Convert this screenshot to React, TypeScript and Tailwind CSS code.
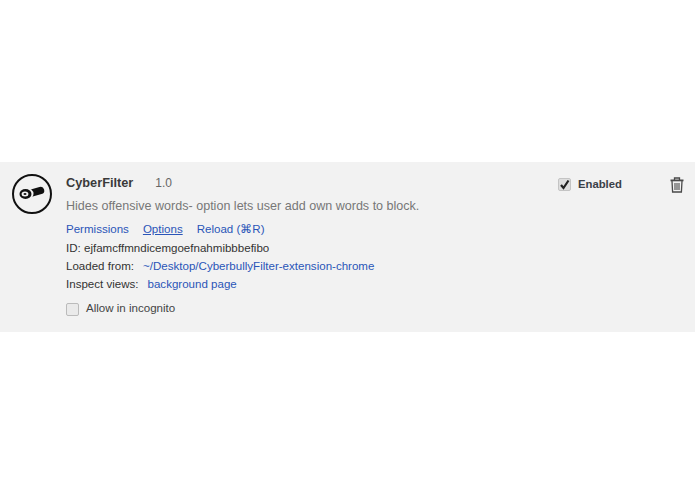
function Logo() {
  return (
    <svg width="42" height="42" viewBox="0 0 42 42" className="shrink-0">
      <circle cx="21" cy="21" r="19" fill="#f2f2f2" stroke="#111" strokeWidth="2" />
      <path d="M19 20.5 L29.5 17.5" fill="none" stroke="#111" strokeWidth="7.5" strokeLinecap="round" />
      <ellipse cx="15" cy="21" rx="7.5" ry="6.2" fill="#f2f2f2" />
      <ellipse cx="14.5" cy="21" rx="6" ry="5" fill="#111" />
      <ellipse cx="14" cy="21" rx="3.4" ry="2.5" fill="#f2f2f2" />
      <ellipse cx="14" cy="21" rx="1.5" ry="1.1" fill="#111" />
    </svg>
  );
}

function TrashIcon() {
  return (
    <svg width="14" height="16" viewBox="0 0 14 16" fill="none" stroke="#4a4a4a" strokeWidth="1.3">
      <path d="M0.5 3.4 H13.5" strokeWidth="1.8" />
      <path d="M4.5 3 V1 H9.5 V3" />
      <path d="M2 4 L2.6 15 H11.4 L12 4" />
      <path d="M5 6 V13 M7 6 V13 M9 6 V13" strokeWidth="1.1" />
    </svg>
  );
}

export default function App() {
  return (
    <div className="w-[695px] h-[494px] bg-white font-['Liberation_Sans',Arial,sans-serif] text-[11.55px] text-[#333] pt-[162px] overflow-hidden">
      <div className="h-[170px] bg-[#f2f2f2] flex pl-[11px] pt-[11px]">
        <Logo />
        <div className="ml-[13px] w-[492px] flex flex-col">
          <div className="flex items-baseline h-[20px]">
            <span className="text-[12.75px] font-bold text-[#3a3a3a]">CyberFilter</span>
            <span className="ml-[22px] text-[12px] text-[#666]">1.0</span>
          </div>
          <p className="mt-[3px] text-[12.55px] leading-[20px] text-[#777]">
            Hides offensive words- option lets user add own words to block.
          </p>
          <div className="mt-[4px] flex gap-[14px] leading-[18px] text-[#2a55b8]">
            <span>Permissions</span>
            <span className="underline">Options</span>
            <span>Reload (⌘R)</span>
          </div>
          <p className="leading-[18px] mt-[1px]">ID: ejfamcffmndicemgoefnahmibbbefibo</p>
          <p className="leading-[18px]">
            Loaded from:
            <span className="ml-[9px] text-[#2a55b8]">~/Desktop/CyberbullyFilter-extension-chrome</span>
          </p>
          <p className="leading-[18px]">
            Inspect views:
            <span className="ml-[9px] text-[#2a55b8]">background page</span>
          </p>
          <label className="mt-[7px] flex items-center h-[18px]">
            <span className="w-[13px] h-[13px] rounded-[2px] border border-[#bbb] bg-[#eaeaea]" />
            <span className="ml-[7px] text-[#444]">Allow in incognito</span>
          </label>
        </div>
        <div className="w-[64px] h-[20px] mt-[1px] flex items-center">
          <span className="w-[13px] h-[13px] rounded-[2px] border border-[#c4c4c4] bg-[#dedede] flex items-center justify-center">
            <svg width="11" height="11" viewBox="0 0 11 11" fill="none" stroke="#222" strokeWidth="2.2">
              <path d="M2 6 L4.5 9 L9.5 1.5" />
            </svg>
          </span>
          <span className="ml-[7px] text-[11.3px] font-bold text-[#3a4048]">Enabled</span>
        </div>
        <div className="ml-[48px] mt-[4px]">
          <TrashIcon />
        </div>
      </div>
    </div>
  );
}
